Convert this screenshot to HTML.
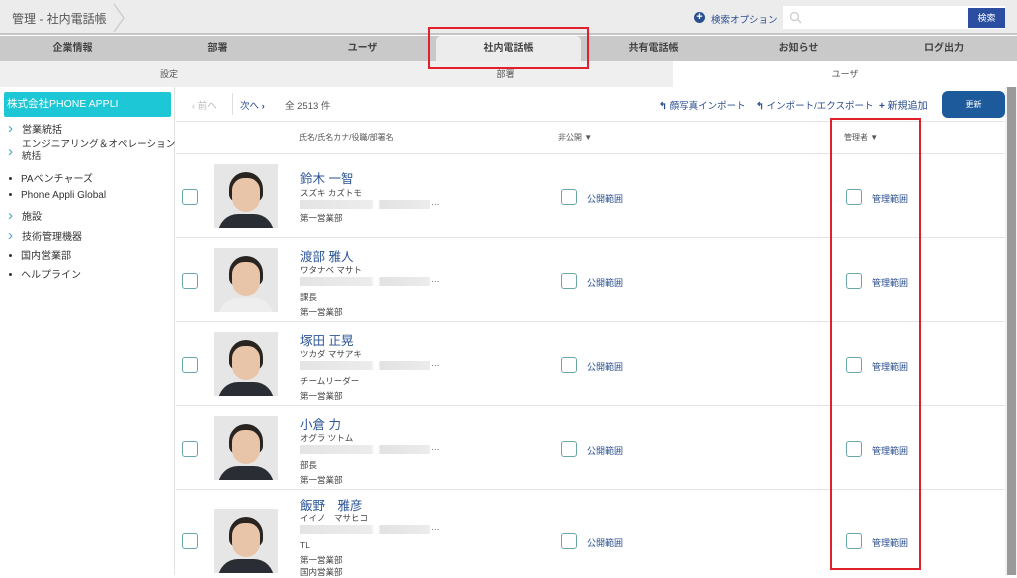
<!DOCTYPE html><html><head><meta charset="utf-8"><style>
*{margin:0;padding:0;box-sizing:border-box}
body{width:1017px;height:575px;overflow:hidden;position:relative;background:#fff;font-family:"Liberation Sans","Noto Sans CJK JP",sans-serif;color:#333}
.a{position:absolute;white-space:nowrap}
.top{left:0;top:0;width:1017px;height:35px;background:#ececec;border-bottom:2px solid #c4c4c4}
.tabs{left:0;top:36px;width:1017px;height:25px;background:#c9c9c9}
.tab{position:absolute;top:0;height:25px;line-height:25px;font-size:10px;font-weight:bold;color:#444;text-align:center}
.sub{top:61px;height:26px;line-height:26px;font-size:9px;text-align:center;color:#555}
.side{left:0;top:87px;width:175px;height:488px;background:#fff;border-right:1px solid #e2e2e2}
.si{position:absolute;left:8px;font-size:10px;color:#333}
.chev{display:inline-block;width:10px;color:#4aa3c8;font-size:15px;line-height:10px;margin-right:4px}
.dot{display:inline-block;width:3px;height:3px;border-radius:50%;background:#333;margin:0 9px 2px 1px}
.cb{position:absolute;width:16px;height:16px;border:1.5px solid #6aa6a8;border-radius:3px;background:#fff}
.lnk{color:#2a4f8f;font-size:9px}
.row{position:absolute;left:176px;width:829px;height:84px;border-top:1px solid #e4e4e4}
.ph{position:absolute;left:38px;width:64px;height:64px;background:#e6e6e6;overflow:hidden}
.ph .hair{position:absolute;left:15px;top:8px;width:34px;height:30px;border-radius:17px 17px 8px 8px;background:#2a2420}
.ph .face{position:absolute;left:18px;top:14px;width:28px;height:34px;border-radius:14px 14px 16px 16px;background:#e8c4a8}
.ph .body{position:absolute;left:4px;top:50px;width:56px;height:30px;border-radius:20px 20px 0 0;background:#2b2d35}
.nm{position:absolute;left:124px;font-size:12.5px;color:#2b5597}
.tx{position:absolute;left:124px;font-size:8.5px;color:#444}
.em{position:absolute;left:124px;width:130px;height:9px;background:linear-gradient(90deg,#e4e4e4,#ececec 55%,#fff 57%,#fff 60%,#e2e2e2 62%,#ececec)}
</style></head><body>
<div class="a top"></div>
<div class="a" style="left:12px;top:10px;font-size:12px;color:#555">管理 - 社内電話帳</div>
<svg class="a" style="left:112px;top:3px" width="16" height="30"><path d="M2 1 L12 15 L2 29" fill="none" stroke="#c9c9c9" stroke-width="1.2"/></svg>
<div class="a" style="left:694px;top:12px;width:11px;height:11px;border-radius:50%;background:#2a4f8f;color:#fff;font-size:11px;line-height:11px;text-align:center;font-weight:bold">+</div>
<div class="a" style="left:711px;top:12px;font-size:9.5px;color:#2a4f8f">検索オプション</div>
<div class="a" style="left:783px;top:6px;width:222px;height:23px;background:#fff"></div>
<svg class="a" style="left:789px;top:11px" width="13" height="13"><circle cx="5.5" cy="5.5" r="4" fill="none" stroke="#ccc" stroke-width="1.3"/><path d="M8.5 8.5 L12 12" stroke="#ccc" stroke-width="1.3"/></svg>
<div class="a" style="left:968px;top:8px;width:37px;height:20px;background:#2b4ea0;color:#fff;font-size:9px;line-height:20px;text-align:center">検索</div>
<div class="a tabs">
<div class="tab" style="left:0;width:145px">企業情報</div>
<div class="tab" style="left:145px;width:145px">部署</div>
<div class="tab" style="left:290px;width:145px">ユーザ</div>
<div class="tab" style="left:436px;width:145px;background:#ececec;border-radius:5px 5px 0 0">社内電話帳</div>
<div class="tab" style="left:581px;width:145px">共有電話帳</div>
<div class="tab" style="left:726px;width:145px">お知らせ</div>
<div class="tab" style="left:871px;width:146px">ログ出力</div>
</div>
<div class="a sub" style="left:0;width:338px;background:#efefef">設定</div>
<div class="a sub" style="left:338px;width:335px;background:#efefef">部署</div>
<div class="a sub" style="left:673px;width:344px;background:#fff">ユーザ</div>
<div class="a side">
<div class="a" style="left:4px;top:5px;width:167px;height:25px;background:#1ec7d6;border-radius:2px;color:#fff;font-size:10.5px;line-height:25px;padding-left:3px">株式会社PHONE APPLI</div>
<div class="si" style="top:34px"><span class="chev">›</span>営業統括</div>
<div class="si" style="top:52px;line-height:12px"><span class="chev" style="position:absolute;top:8px">›</span><span style="position:absolute;left:14px;font-size:9.6px">エンジニアリング＆オペレーション<br>統括</span></div>
<div class="si" style="top:83px"><span class="dot"></span>PAベンチャーズ</div>
<div class="si" style="top:103px"><span class="dot"></span>Phone Appli Global</div>
<div class="si" style="top:121px"><span class="chev">›</span>施設</div>
<div class="si" style="top:141px"><span class="chev">›</span>技術管理機器</div>
<div class="si" style="top:160px"><span class="dot"></span>国内営業部</div>
<div class="si" style="top:179px"><span class="dot"></span>ヘルプライン</div>
</div>
<div class="a" style="left:1005px;top:87px;width:12px;height:488px;background:#f2f2f2"></div>
<div class="a" style="left:1007px;top:87px;width:9px;height:488px;background:#9a9a9a"></div>
<div class="a" style="left:192px;top:98px;font-size:9.5px;color:#bbb">‹ 前へ</div>
<div class="a" style="left:232px;top:93px;width:1px;height:22px;background:#ddd"></div>
<div class="a" style="left:240px;top:98px;font-size:9.5px;color:#2a4f8f">次へ <b>›</b></div>
<div class="a" style="left:285px;top:98px;font-size:9.5px;color:#555">全 2513 件</div>
<div class="a" style="left:659px;top:98px;font-size:9.5px;color:#2a4f8f"><b>↰</b> 顔写真インポート</div>
<div class="a" style="left:756px;top:98px;font-size:9.5px;color:#2a4f8f"><b>↰</b> インポート/エクスポート</div>
<div class="a" style="left:879px;top:97px;font-size:10px;color:#2a4f8f"><b>+</b> 新規追加</div>
<div class="a" style="left:942px;top:91px;width:63px;height:27px;background:#1d5a9c;border-radius:6px;color:#fff;font-size:8px;line-height:27px;text-align:center">更新</div>
<div class="a" style="left:176px;top:121px;width:829px;height:1px;background:#e4e4e4"></div>
<div class="a" style="left:299px;top:132px;font-size:8px;color:#555">氏名/氏名カナ/役職/部署名</div>
<div class="a" style="left:558px;top:132px;font-size:8px;color:#555">非公開 <b style="color:#555">▼</b></div>
<div class="a" style="left:844px;top:132px;font-size:8px;color:#555">管理者 <b>▼</b></div>

<div class="row" style="top:153px">
<div class="cb" style="left:6px;top:35px"></div><div class="ph" style="top:10px"><div class="hair"></div><div class="face"></div><div class="body"></div></div>
<div class="nm" style="top:14px">鈴木 一智</div><div class="tx" style="top:33px">スズキ カズトモ</div><div class="em" style="top:46px"></div><div class="tx" style="left:255px;top:43px">…</div><div class="tx" style="top:58px">第一営業部</div>
<div class="cb" style="left:385px;top:35px"></div><div class="a lnk" style="left:411px;top:38px">公開範囲</div>
<div class="cb" style="left:670px;top:35px"></div><div class="a lnk" style="left:696px;top:38px">管理範囲</div></div>

<div class="row" style="top:237px">
<div class="cb" style="left:6px;top:35px"></div><div class="ph" style="top:10px"><div class="hair"></div><div class="face"></div><div class="body" style="background:#eee"></div></div>
<div class="nm" style="top:8px">渡部 雅人</div><div class="tx" style="top:26px">ワタナベ マサト</div><div class="em" style="top:39px"></div><div class="tx" style="left:255px;top:36px">…</div><div class="tx" style="top:53px">課長</div><div class="tx" style="top:68px">第一営業部</div>
<div class="cb" style="left:385px;top:35px"></div><div class="a lnk" style="left:411px;top:38px">公開範囲</div>
<div class="cb" style="left:670px;top:35px"></div><div class="a lnk" style="left:696px;top:38px">管理範囲</div></div>

<div class="row" style="top:321px">
<div class="cb" style="left:6px;top:35px"></div><div class="ph" style="top:10px"><div class="hair"></div><div class="face"></div><div class="body"></div></div>
<div class="nm" style="top:8px">塚田 正晃</div><div class="tx" style="top:26px">ツカダ マサアキ</div><div class="em" style="top:39px"></div><div class="tx" style="left:255px;top:36px">…</div><div class="tx" style="top:53px">チームリーダー</div><div class="tx" style="top:68px">第一営業部</div>
<div class="cb" style="left:385px;top:35px"></div><div class="a lnk" style="left:411px;top:38px">公開範囲</div>
<div class="cb" style="left:670px;top:35px"></div><div class="a lnk" style="left:696px;top:38px">管理範囲</div></div>

<div class="row" style="top:405px">
<div class="cb" style="left:6px;top:35px"></div><div class="ph" style="top:10px"><div class="hair"></div><div class="face"></div><div class="body"></div></div>
<div class="nm" style="top:8px">小倉 力</div><div class="tx" style="top:26px">オグラ ツトム</div><div class="em" style="top:39px"></div><div class="tx" style="left:255px;top:36px">…</div><div class="tx" style="top:53px">部長</div><div class="tx" style="top:68px">第一営業部</div>
<div class="cb" style="left:385px;top:35px"></div><div class="a lnk" style="left:411px;top:38px">公開範囲</div>
<div class="cb" style="left:670px;top:35px"></div><div class="a lnk" style="left:696px;top:38px">管理範囲</div></div>

<div class="row" style="top:489px;height:86px">
<div class="cb" style="left:6px;top:43px"></div><div class="ph" style="top:19px"><div class="hair"></div><div class="face"></div><div class="body"></div></div>
<div class="nm" style="top:5px">飯野　雅彦</div><div class="tx" style="top:22px">イイノ　マサヒコ</div><div class="em" style="top:35px"></div><div class="tx" style="left:255px;top:32px">…</div><div class="tx" style="top:50px">TL</div><div class="tx" style="top:64px">第一営業部</div><div class="tx" style="top:76px">国内営業部</div>
<div class="cb" style="left:385px;top:43px"></div><div class="a lnk" style="left:411px;top:46px">公開範囲</div>
<div class="cb" style="left:670px;top:43px"></div><div class="a lnk" style="left:696px;top:46px">管理範囲</div></div>

<div class="a" style="left:428px;top:27px;width:161px;height:42px;border:2px solid #e0202a"></div>
<div class="a" style="left:830px;top:118px;width:91px;height:452px;border:2px solid #e0202a"></div>
</body></html>
